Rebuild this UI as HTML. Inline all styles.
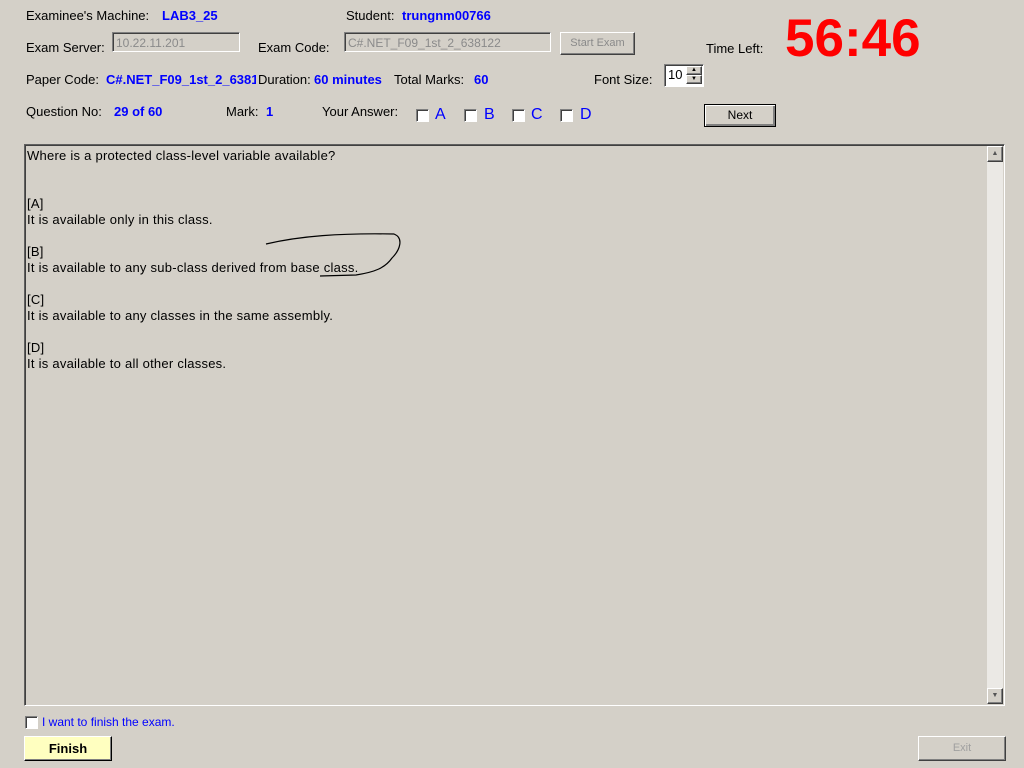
<!DOCTYPE html>
<html><head><style>
body{margin:0;width:1024px;height:768px;background:#d4d0c8;font-family:"Liberation Sans",sans-serif;font-size:13px;color:#000;position:relative;overflow:hidden}
.a{position:absolute;white-space:nowrap}
.q{letter-spacing:0.25px}
.b{color:#0000ff;font-weight:bold}
.inp{position:absolute;height:20px;border:1px solid;border-color:#808080 #fff #fff #808080;box-shadow:inset 1px 1px 0 #404040;color:#8a8a8a;font-size:12px;line-height:20px;padding-left:3px;box-sizing:border-box;background:#d4d0c8}
.btn{position:absolute;border:1px solid;border-color:#fff #404040 #404040 #fff;box-shadow:inset -1px -1px 0 #808080;box-sizing:border-box;text-align:center;font-size:11px}
.cb{position:absolute;width:11px;height:11px;background:#fff;border:1px solid;border-color:#808080 #fff #fff #808080;box-shadow:inset 1px 1px 0 #404040}
.l{color:#0000ff;font-size:16px}
</style></head><body>
<div class="a" style="left:26px;top:8px">Examinee's Machine:</div>
<div class="a b" style="left:162px;top:8px">LAB3_25</div>
<div class="a" style="left:346px;top:8px">Student:</div>
<div class="a b" style="left:402px;top:8px">trungnm00766</div>
<div class="a" style="left:26px;top:40px">Exam Server:</div>
<div class="inp" style="left:112px;top:32px;width:128px">10.22.11.201</div>
<div class="a" style="left:258px;top:40px">Exam Code:</div>
<div class="inp" style="left:344px;top:32px;width:207px">C#.NET_F09_1st_2_638122</div>
<div class="btn" style="left:560px;top:32px;width:75px;height:23px;line-height:21px;color:#8a8a8a">Start Exam</div>
<div class="a" style="left:706px;top:41px">Time Left:</div>
<div class="a" style="left:785px;top:8px;color:#ff0000;font-weight:bold;font-size:53px;line-height:62px">56:46</div>
<div class="a" style="left:26px;top:72px">Paper Code:</div>
<div class="a b" style="left:106px;top:72px;width:150px;overflow:hidden">C#.NET_F09_1st_2_638122</div>
<div class="a" style="left:258px;top:72px">Duration:</div>
<div class="a b" style="left:314px;top:72px">60 minutes</div>
<div class="a" style="left:394px;top:72px">Total Marks:</div>
<div class="a b" style="left:474px;top:72px">60</div>
<div class="a" style="left:594px;top:72px">Font Size:</div>
<div class="inp" style="left:664px;top:64px;width:40px;height:23px;background:#fff;color:#000;font-size:13px">10</div>
<div class="btn" style="left:686px;top:66px;width:16px;height:9px;background:#d4d0c8;font-size:6px;line-height:7px">▲</div>
<div class="btn" style="left:686px;top:75px;width:16px;height:9px;background:#d4d0c8;font-size:6px;line-height:7px">▼</div>
<div class="a" style="left:26px;top:104px">Question No:</div>
<div class="a b" style="left:114px;top:104px">29 of 60</div>
<div class="a" style="left:226px;top:104px">Mark:</div>
<div class="a b" style="left:266px;top:104px">1</div>
<div class="a" style="left:322px;top:104px">Your Answer:</div>
<div class="cb" style="left:416px;top:109px"></div><div class="a l" style="left:435px;top:106px">A</div>
<div class="cb" style="left:464px;top:109px"></div><div class="a l" style="left:484px;top:106px">B</div>
<div class="cb" style="left:512px;top:109px"></div><div class="a l" style="left:531px;top:106px">C</div>
<div class="cb" style="left:560px;top:109px"></div><div class="a l" style="left:580px;top:106px">D</div>
<div class="btn" style="left:704px;top:104px;width:72px;height:23px;line-height:21px;font-size:12px;border-color:#000;box-shadow:inset 1px 1px 0 #fff,inset -2px -2px 0 #808080">Next</div>
<div style="position:absolute;left:24px;top:144px;width:981px;height:562px;border:1px solid;border-color:#606060 #fff #fff #606060;box-sizing:border-box;box-shadow:inset 1px 1px 0 #404040"></div>
<div style="position:absolute;left:987px;top:146px;width:16px;height:558px;background:#ebe9e5"></div>
<div class="btn" style="left:987px;top:146px;width:16px;height:16px;background:#d4d0c8;font-size:7px;line-height:14px;color:#555">▲</div>
<div class="btn" style="left:987px;top:688px;width:16px;height:16px;background:#d4d0c8;font-size:7px;line-height:14px;color:#555">▼</div>
<div class="a q" style="left:27px;top:148px;line-height:16px">Where is a protected class-level variable available?</div>
<div class="a q" style="left:27px;top:196px;line-height:16px">[A]<br>It is available only in this class.</div>
<div class="a q" style="left:27px;top:244px;line-height:16px">[B]<br>It is available to any sub-class derived from base class.</div>
<div class="a q" style="left:27px;top:292px;line-height:16px">[C]<br>It is available to any classes in the same assembly.</div>
<div class="a q" style="left:27px;top:340px;line-height:16px">[D]<br>It is available to all other classes.</div>
<svg style="position:absolute;left:0;top:0" width="1024" height="768"><path d="M266 244 C300 236 340 233 394 234 C404 238 400 250 392 258 C385 268 375 272 356 275 L320 276" fill="none" stroke="#000" stroke-width="1.2"/></svg>
<div class="cb" style="left:25px;top:716px"></div>
<div class="a" style="left:42px;top:715px;color:#0000ff;font-size:12px">I want to finish the exam.</div>
<div class="btn" style="left:24px;top:736px;width:88px;height:25px;background:#ffffc0;line-height:23px;font-size:13px;font-weight:bold;border-color:#fff #000 #000 #fff">Finish</div>
<div class="btn" style="left:918px;top:736px;width:88px;height:25px;line-height:23px;color:#a0a0a0">Exit</div>
</body></html>
